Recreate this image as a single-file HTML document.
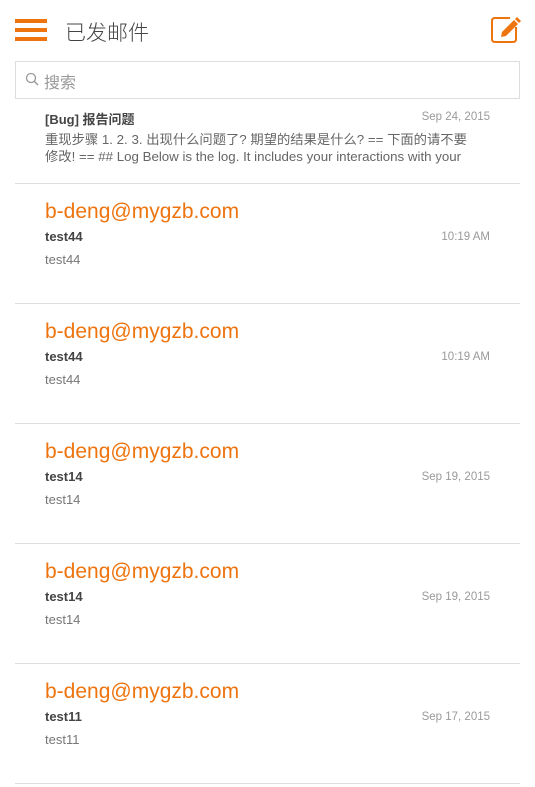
<!DOCTYPE html>
<html><head><meta charset="utf-8"><style>
*{margin:0;padding:0;box-sizing:border-box}
body{width:535px;height:787px;background:#fff;font-family:"Liberation Sans","Noto Sans CJK SC",sans-serif;position:relative;overflow:hidden;color:#555}
.a{position:absolute}
.bar{position:absolute;left:15px;width:32px;height:4px;background:#ee7410}
.date{position:absolute;right:45px;font-size:11.5px;color:#999}
.line{position:absolute;left:15px;width:505px;height:1px;background:#ddd}
.em{position:absolute;left:45px;font-size:21px;color:#ee7410}
.sub{position:absolute;left:45px;font-size:13px;font-weight:bold;color:#444}
.pre{position:absolute;left:45px;font-size:13px;color:#777}
</style></head><body>
<div class="bar" style="top:19px"></div>
<div class="bar" style="top:28px"></div>
<div class="bar" style="top:37px"></div>
<div class="a" style="left:65px;top:17px;font-size:21px;color:#444;font-weight:300">已发邮件</div>
<svg class="a" style="left:488px;top:14px" width="35" height="32" viewBox="0 0 35 32">
<path d="M22 4 H7 Q4 4 4 7 V25 Q4 28 7 28 H25 Q28 28 28 25 V13" fill="none" stroke="#ee7410" stroke-width="2"/>
<path d="M13 23 L14 18 L26 6 L30 10 L18 22 Z" fill="#ee7410"/>
<path d="M27 5 L29 3 L33 7 L31 9 Z" fill="#ee7410"/>
</svg>
<div class="a" style="left:15px;top:61px;width:505px;height:38px;border:1px solid #ddd"></div>
<svg class="a" style="left:25px;top:72px" width="14" height="14" viewBox="0 0 14 14"><circle cx="6" cy="6" r="4.5" fill="none" stroke="#999" stroke-width="1.3"/><path d="M9.2 9.2 L13 13" stroke="#999" stroke-width="1.4"/></svg>
<div class="a" style="left:44px;top:69px;font-size:16px;color:#999">搜索</div>

<div class="sub" style="top:109px">[Bug] 报告问题</div>
<div class="date" style="top:111px">Sep 24, 2015</div>
<div class="a" style="left:45px;top:131px;font-size:13.3px;color:#666;line-height:17px;width:450px;white-space:nowrap">重现步骤 1. 2. 3. 出现什么问题了? 期望的结果是什么? == 下面的请不要<br>修改! == ## Log Below is the log. It includes your interactions with your</div>
<div class="line" style="top:183px"></div>

<div class="em" style="top:200px">b-deng@mygzb.com</div><div class="sub" style="top:229px">test44</div><div class="date" style="top:231px">10:19 AM</div><div class="pre" style="top:252px">test44</div><div class="line" style="top:303px"></div>
<div class="em" style="top:320px">b-deng@mygzb.com</div><div class="sub" style="top:349px">test44</div><div class="date" style="top:351px">10:19 AM</div><div class="pre" style="top:372px">test44</div><div class="line" style="top:423px"></div>
<div class="em" style="top:440px">b-deng@mygzb.com</div><div class="sub" style="top:469px">test14</div><div class="date" style="top:471px">Sep 19, 2015</div><div class="pre" style="top:492px">test14</div><div class="line" style="top:543px"></div>
<div class="em" style="top:560px">b-deng@mygzb.com</div><div class="sub" style="top:589px">test14</div><div class="date" style="top:591px">Sep 19, 2015</div><div class="pre" style="top:612px">test14</div><div class="line" style="top:663px"></div>
<div class="em" style="top:680px">b-deng@mygzb.com</div><div class="sub" style="top:709px">test11</div><div class="date" style="top:711px">Sep 17, 2015</div><div class="pre" style="top:732px">test11</div><div class="line" style="top:783px"></div>
</body></html>
